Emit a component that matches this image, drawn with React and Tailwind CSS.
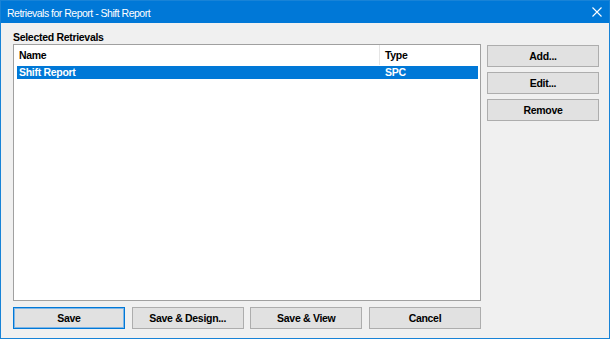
export default function App() {
  const btn =
    "w-[112px] h-[22px] shrink-0 bg-[#e1e1e1] border border-[#adadad] flex items-center justify-center text-[10.5px] font-bold tracking-[-0.3px] text-black leading-none";
  return (
    <div className="w-[610px] h-[339px] bg-[#f0f0f0] border border-[#1883d7] flex flex-col font-['Liberation_Sans',Arial,sans-serif] text-black">
      <div className="h-[22px] bg-[#0078d7] flex items-start justify-between pl-[6px] pr-[7px]">
        <div className="pt-[6px] text-white text-[10.5px] leading-[12px] tracking-[-0.5px]">
          Retrievals for Report - Shift Report
        </div>
        <svg className="mt-[6px]" width="10" height="10" viewBox="0 0 10 10">
          <path d="M0.5 0.5 L9.5 9.5 M9.5 0.5 L0.5 9.5" stroke="#ffffff" strokeWidth="1.1" fill="none" />
        </svg>
      </div>
      <div className="flex-1 flex flex-col pl-[12px] pr-[9px] pt-[8px]">
        <div className="h-[12px] leading-[12px] text-[10.5px] font-bold tracking-[-0.3px] mb-[1px]">
          Selected Retrievals
        </div>
        <div className="flex items-start">
          <div className="w-[468px] h-[257px] shrink-0 bg-white border border-[#a0a0a0] flex flex-col">
            <div className="h-[20px] flex text-[10.5px] font-bold tracking-[-0.3px] leading-[20px]">
              <div className="w-[365px] pl-[5px]">Name</div>
              <div className="w-px h-full bg-[#e5e5e5]"></div>
              <div className="pl-[5px]">Type</div>
            </div>
            <div className="mt-[1px] ml-[3px] mr-[2px] h-[13px] bg-[#0078d7] flex text-white text-[10.5px] font-bold tracking-[-0.3px] leading-[13px]">
              <div className="w-[366px] pl-[2px]">Shift Report</div>
              <div className="pl-[2px]">SPC</div>
            </div>
          </div>
          <div className="ml-[6px] pt-[1px] flex flex-col gap-[5px] shrink-0">
            <div className={btn}>Add...</div>
            <div className={btn}>Edit...</div>
            <div className={btn}>Remove</div>
          </div>
        </div>
        <div className="mt-[6px] w-[468px] flex justify-between">
          <div className="w-[112px] h-[22px] bg-[#e1e1e1] border border-[#0078d7] shadow-[inset_0_0_0_1px_#7fb6e6] flex items-center justify-center text-[10.5px] font-bold tracking-[-0.3px] leading-none">
            Save
          </div>
          <div className={btn}>Save &amp; Design...</div>
          <div className={btn}>Save &amp; View</div>
          <div className={btn}>Cancel</div>
        </div>
      </div>
    </div>
  );
}
